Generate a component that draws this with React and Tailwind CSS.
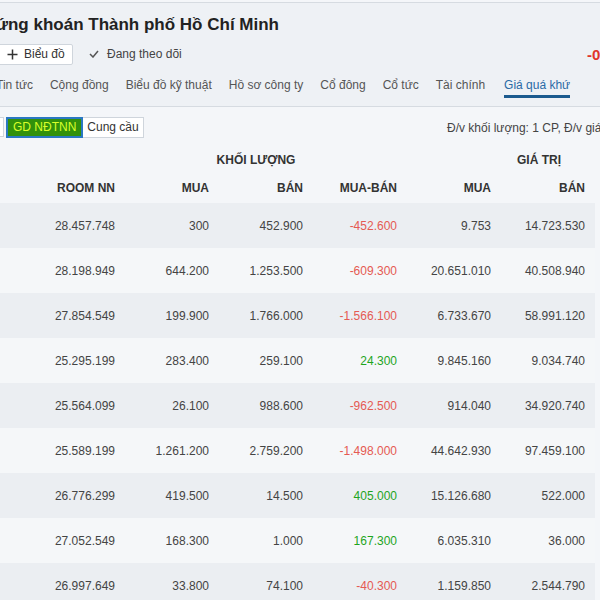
import React from "react";

const rows = [
  ["28.457.748", "300", "452.900", "-452.600", "9.753", "14.723.530"],
  ["28.198.949", "644.200", "1.253.500", "-609.300", "20.651.010", "40.508.940"],
  ["27.854.549", "199.900", "1.766.000", "-1.566.100", "6.733.670", "58.991.120"],
  ["25.295.199", "283.400", "259.100", "24.300", "9.845.160", "9.034.740"],
  ["25.564.099", "26.100", "988.600", "-962.500", "914.040", "34.920.740"],
  ["25.589.199", "1.261.200", "2.759.200", "-1.498.000", "44.642.930", "97.459.100"],
  ["26.776.299", "419.500", "14.500", "405.000", "15.126.680", "522.000"],
  ["27.052.549", "168.300", "1.000", "167.300", "6.035.310", "36.000"],
  ["26.997.649", "33.800", "74.100", "-40.300", "1.159.850", "2.544.790"],
];

const tabs = ["Tin tức", "Cộng đồng", "Biểu đồ kỹ thuật", "Hồ sơ công ty", "Cổ đông", "Cổ tức", "Tài chính", "Giá quá khứ"];

export default function App() {
  return (
    <div className="w-[600px] h-[600px] overflow-hidden bg-[#f4f6f9] text-[#333]" style={{ fontFamily: '"Liberation Sans", Arial, sans-serif' }}>
      <div className="h-[2px] bg-[#f4f6f9]" />
      <div className="bg-[#eef1f5] border-t border-[#d6dbe1] border-b border-b-[#d6dbe1] h-[105px] flex flex-col">
        <div className="h-[40px] flex items-center">
          <h1 className="ml-[-27px] text-[17px] font-bold text-[#222] whitespace-nowrap leading-none pt-[3px]">Chứng khoán Thành phố Hồ Chí Minh</h1>
        </div>
        <div className="h-[22px] flex items-center relative">
          <button className="ml-[-2px] h-[21px] w-[75px] bg-white border border-[#cfd5dc] rounded-[2px] flex items-center gap-[6px] pl-[8px] text-[12px] text-[#333]">
            <svg width="11" height="11" viewBox="0 0 11 11"><path d="M5.5 0.5v10M0.5 5.5h10" stroke="#333" strokeWidth="1.5" /></svg>
            Biểu đồ
          </button>
          <span className="ml-[16px] flex items-center gap-[8px] text-[12px] text-[#444]">
            <svg width="10" height="8" viewBox="0 0 10 8"><path d="M1 4l3 3 5-6" fill="none" stroke="#555" strokeWidth="1.5" /></svg>
            Đang theo dõi
          </span>
          <span className="absolute left-[587px] top-[1px] text-[15px] font-bold text-[#e0342a]">-0,</span>
        </div>
        <div className="flex items-start mt-[11px] ml-[-4px] gap-[17px] text-[12px] text-[#555] whitespace-nowrap">
          {tabs.map((t, i) => (
            <div key={t} className={i === 7 ? "text-[#2a6aa5] border-b-[3px] border-[#1b5a8e] pb-[1px] ml-[2px]" : ""}>{t}</div>
          ))}
        </div>
      </div>
      <div className="flex items-center h-[40px] relative">
        <div className="ml-[-30px] h-[20px] w-[34px] bg-white border border-[#cfd5dc]" />
        <div className="flex h-[21px] ml-[2px]">
          <div className="h-[21px] px-[5px] bg-[#32910b] border-2 border-[#2a78c2] text-[#d9ff2a] text-[12px] flex items-center leading-none">GD NĐTNN</div>
          <div className="h-[21px] px-[4px] bg-white border border-[#cfd5dc] border-l-0 text-[12px] flex items-center leading-none text-[#333]">Cung cầu</div>
        </div>
        <div className="absolute left-[447px] top-[12px] text-[12px] text-[#444] whitespace-nowrap">Đ/v khối lượng: 1 CP, Đ/v giá: 1000 VNĐ</div>
      </div>
      <div className="w-[595px]">
        <div className="flex h-[28px] items-center text-[12px] font-bold text-[#333] mt-[-2px]">
          <div className="w-[125px]" />
          <div className="w-[282px] text-center pr-[20px] pt-[2px]">KHỐI LƯỢNG</div>
          <div className="w-[188px] text-center pl-[76px] pt-[2px]">GIÁ TRỊ</div>
        </div>
        <div className="flex h-[30px] items-center text-[12px] font-bold text-[#333]">
          <div className="w-[31px]" />
          {["ROOM NN", "MUA", "BÁN", "MUA-BÁN", "MUA", "BÁN"].map((h, i) => (
            <div key={i} className="w-[94px] text-right pr-[10px]">{h}</div>
          ))}
        </div>
        {rows.map((r, ri) => (
          <div key={ri} className={"flex h-[45px] items-center text-[12px] " + (ri % 2 === 0 ? "bg-[#ebeef2]" : "bg-[#f5f7f9]")}>
            <div className="w-[31px]" />
            {r.map((v, ci) => {
              let cls = "text-[#444]";
              if (ci === 3) cls = v.startsWith("-") ? "text-[#e55a52]" : "text-[#1ea51e]";
              return (
                <div key={ci} className={"w-[94px] text-right pr-[10px] " + cls}>{v}</div>
              );
            })}
          </div>
        ))}
      </div>
    </div>
  );
}
